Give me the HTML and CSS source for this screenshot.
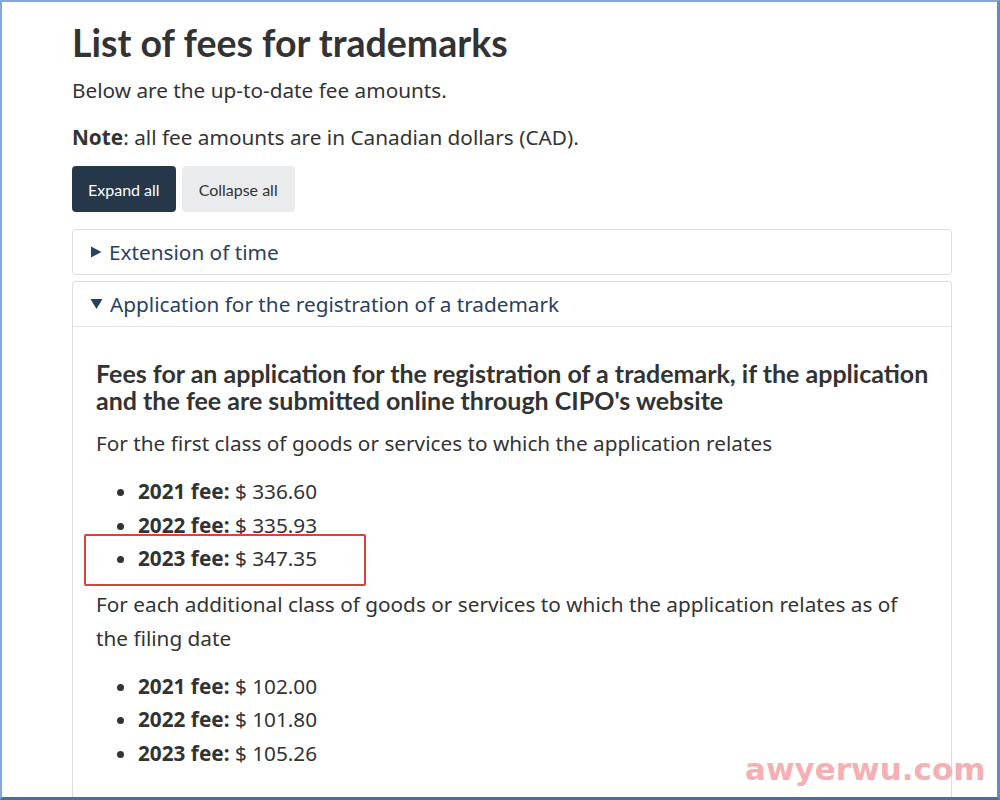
FILE: index.html
```html
<!DOCTYPE html>
<html lang="en">
<head>
<meta charset="utf-8">
<title>List of fees for trademarks</title>
<link rel="stylesheet" href="styles.css">
</head>
<body>
<div class="frame">
  <main class="page">
    <h1 class="title">List of fees for trademarks</h1>
    <p class="text">Below are the up-to-date fee amounts.</p>
    <p class="text"><strong>Note</strong>: all fee amounts are in Canadian dollars (CAD).</p>
    <div class="btns">
      <button class="btn btn-primary">Expand all</button>
      <button class="btn btn-default">Collapse all</button>
    </div>
    <section class="panel">
      <div class="panel-head">
        <svg class="caret" width="12" height="12" viewBox="0 0 12 12"><polygon points="1,0.5 11.5,6 1,11.5" fill="#284162"/></svg>
        <span>Extension of time</span>
      </div>
    </section>
    <section class="panel panel-open">
      <div class="panel-head">
        <svg class="caret" width="13" height="12" viewBox="0 0 13 12"><polygon points="0.5,1 12.5,1 6.5,11" fill="#284162"/></svg>
        <span>Application for the registration of a trademark</span>
      </div>
      <div class="panel-body">
        <h3 class="sub">Fees for an application for the registration of a trademark, if the application and the fee are submitted online through CIPO's website</h3>
        <p class="text">For the first class of goods or services to which the application relates</p>
        <ul class="fees">
          <li><strong>2021 fee:</strong> $ 336.60</li>
          <li><strong>2022 fee:</strong> $ 335.93</li>
          <li class="hl"><strong>2023 fee:</strong> $ 347.35</li>
        </ul>
        <p class="text">For each additional class of goods or services to which the application relates as of the filing date</p>
        <ul class="fees">
          <li><strong>2021 fee:</strong> $ 102.00</li>
          <li><strong>2022 fee:</strong> $ 101.80</li>
          <li><strong>2023 fee:</strong> $ 105.26</li>
        </ul>
      </div>
    </section>
  </main>
  <div class="watermark">awyerwu.com</div>
</div>
</body>
</html>
```
FILE: styles.css
```css
* { box-sizing: border-box; }
html, body { margin: 0; padding: 0; background: #ffffff; }
body {
  width: 1000px;
  height: 800px;
  overflow: hidden;
  font-family: "Noto Sans", "DejaVu Sans", sans-serif;
  color: #333333;
}
.frame {
  position: relative;
  width: 1000px;
  height: 800px;
  overflow: hidden;
  border-top: 2px solid #7ea9da;
  border-left: 2px solid #7ea9da;
  border-right: 3px solid #5f8cc4;
  border-bottom: 3px solid #4a6f9e;
  background: #ffffff;
}
.page {
  padding: 18px 0 0 70px;
  width: 950px;
}
.title {
  font-family: Lato, "Liberation Sans", sans-serif;
  font-weight: 700;
  font-size: 37.5px;
  line-height: 1.2;
  margin: 0 0 8px 0;
  color: #333333;
}
.text {
  font-size: 20.75px;
  line-height: 34px;
  margin: 0 0 13px 0;
}
.page > .text:nth-of-type(2) { margin-bottom: 12px; }
.text strong { font-weight: 700; }
.btns {
  display: flex;
  gap: 6px;
  margin: 0 0 17px 0;
}
.btn {
  font-family: Lato, "Liberation Sans", sans-serif;
  font-size: 16px;
  height: 46px;
  padding: 0 16px;
  border: none;
  border-radius: 4px;
  cursor: pointer;
}
.btn-primary { background: #26374a; color: #ffffff; }
.btn-default { background: #eaebed; color: #333333; padding: 0 17px; }
.panel {
  border: 1px solid #dcdcdc;
  border-radius: 4px;
  margin: 0 0 6px 0;
  background: #ffffff;
}
.panel-open { border-bottom: none; border-radius: 4px 4px 0 0; }
.panel-head {
  display: flex;
  align-items: center;
  gap: 7px;
  padding: 5px 17px;
  font-size: 20.75px;
  line-height: 34px;
  color: #284162;
}
.caret { flex: none; }
.panel-open .panel-head { border-bottom: 1px solid #e3e3e3; }
.panel-body {
  padding: 33px 22px 40px 23px;
}
.sub {
  font-family: Lato, "Liberation Sans", sans-serif;
  font-weight: 700;
  font-size: 25px;
  line-height: 27px;
  margin: 0 0 12px 0;
  color: #333333;
}
.fees {
  margin: 15px 0 11px 0;
  padding: 0 0 0 42px;
  font-size: 20.75px;
  line-height: 33.5px;
}
.fees li strong { font-weight: 700; }
.hl { position: relative; }
.hl::after {
  content: "";
  position: absolute;
  left: -54px;
  top: -8px;
  width: 278px;
  height: 48px;
  border: 2px solid #d9433b;
  border-radius: 2px;
}
.watermark {
  position: absolute;
  left: 743px;
  top: 749px;
  font-family: "DejaVu Sans", sans-serif;
  font-weight: 700;
  font-size: 31px;
  color: #f3a3a6;
  opacity: 0.85;
}
```
